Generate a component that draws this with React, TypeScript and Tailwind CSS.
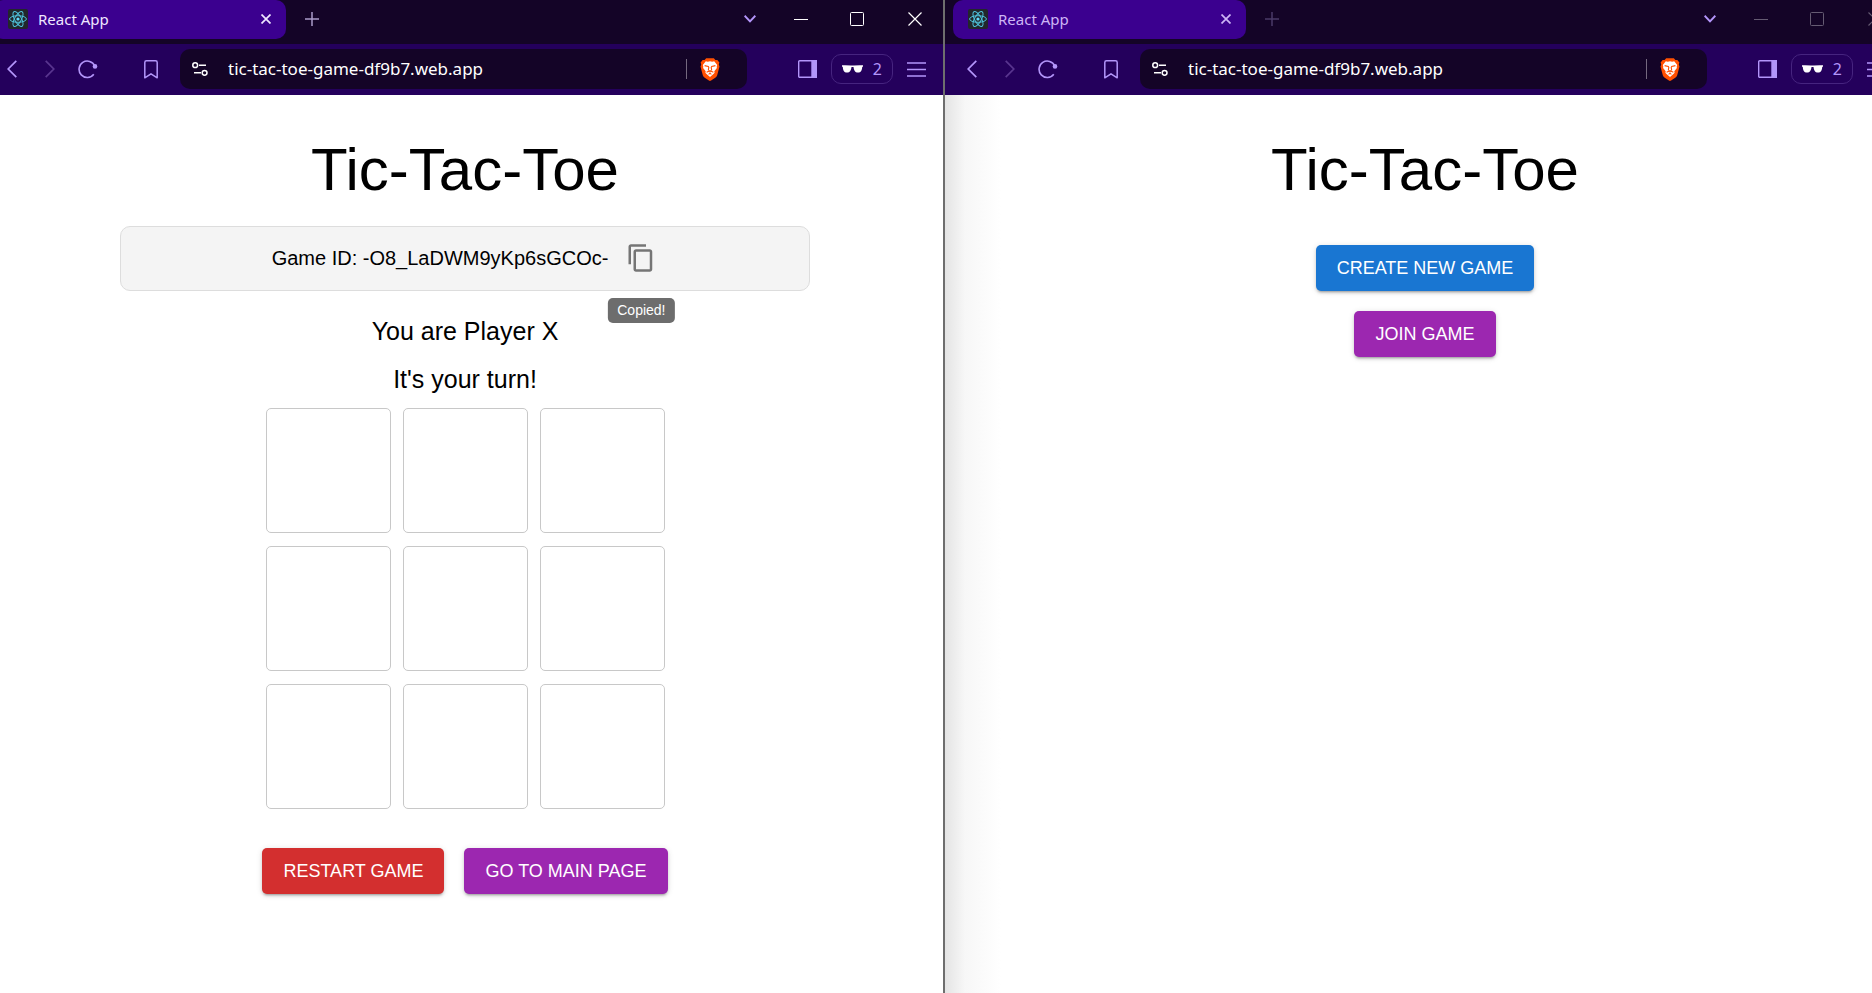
import React from "react";

const ui = "font-['Noto_Sans','Open_Sans',sans-serif]";
const primaryText = "font-['Liberation_Sans',Arial,sans-serif]";

function ReactLogo() {
  return (
    <svg viewBox="0 0 20 20" className="size-5 shrink-0" fill="none" stroke="#4fc3dc" aria-hidden="true">
      <rect width="20" height="20" rx="2" fill="#22272b" stroke="none" />
      <ellipse cx="10" cy="10" rx="8.4" ry="3.3" />
      <ellipse cx="10" cy="10" rx="8.4" ry="3.3" transform="rotate(60 10 10)" />
      <ellipse cx="10" cy="10" rx="8.4" ry="3.3" transform="rotate(120 10 10)" />
      <circle cx="10" cy="10" r="1.6" fill="#61dafb" stroke="none" />
    </svg>
  );
}

function BraveLogo() {
  return (
    <svg viewBox="0 0 20 23" className="h-[23px] w-5 shrink-0" aria-hidden="true">
      <path fill="#ff5000" d="M6.200.3h7.600l1.600 1.800 1.900-.1 2.100 2.400-.6 2 .7 2.100-2.300 8.700c-.3 1-.8 1.700-1.600 2.300l-4.500 3.100c-.7.4-1.500.4-2.200 0l-4.500-3.100c-.8-.6-1.300-1.300-1.600-2.300L.5 8.500l.7-2.100-.6-2L2.700 2l1.900.1z" />
      <path fill="#fff" d="M5.800 3.300l2 .4 2.200-.4 2.200.4 2-.4 3 3.700-.5 1.600.2 1.400-2.600 3.200.3 1.500-.9 1-3.700 3.200-3.700-3.200-.9-1 .3-1.500-2.600-3.200.2-1.400L2.800 7z" />
      <path fill="none" stroke="#ff5000" strokeWidth="1.100" d="M4.600 7.600l3.700.9.500.9-.5 2.900M15.400 7.600l-3.700.9-.5.9.5 2.900M6.600 14.200L10 12.700l3.400 1.500M10 12.600v1.800M8.600 16.400l1.400-1 1.400 1" />
    </svg>
  );
}

function BrowserChrome({ active }: { active: boolean }) {
  const dim = active ? "text-white" : "text-[#655b72]";
  return (
    <header className={`${ui} text-[#b395fa]`}>
      <div className="flex h-11 items-start bg-[#140427]">
        <div className={`ml-2 flex h-[39px] w-[293px] items-center rounded-[10px] bg-[#3b008f] pr-3 pb-0.5 pl-[15px] ${active ? "text-[#efe7ff]" : "text-[#cdb5f5]"}`}>
          <ReactLogo />
          <span className="ml-[10px] flex-1 text-[15px] leading-5">React App</span>
          <button aria-label="Close tab" className="flex size-4 items-center justify-center">
            <svg viewBox="0 0 10 10" className="size-[10px]" stroke="currentColor" strokeWidth="1.7" fill="none"><path d="M.5.5l9 9M9.5.5l-9 9" /></svg>
          </button>
        </div>
        <button aria-label="New tab" className={`ml-[18px] flex h-[38px] w-4 items-center justify-center ${active ? "text-[#a99bc9]" : "text-[#4a3a68]"}`}>
          <svg viewBox="0 0 14 14" className="size-[14px] shrink-0" stroke="currentColor" strokeWidth="1.5" fill="none"><path d="M7 0v14M0 7h14" /></svg>
        </button>
        <div className="ml-auto flex h-[38px] items-center">
          <button aria-label="Search tabs" className="mr-[38px]">
            <svg viewBox="0 0 12 8" className="h-2 w-3" stroke="currentColor" strokeWidth="2" fill="none"><path d="M.6.8L6 6.4 11.4.8" /></svg>
          </button>
          <button aria-label="Minimize" className={`mr-[42px] ${dim}`}>
            <svg viewBox="0 0 14 14" className="size-[14px]" stroke="currentColor" fill="none"><path d="M0 7.5h14" /></svg>
          </button>
          <button aria-label="Maximize" className={`mr-[44px] ${dim}`}>
            <svg viewBox="0 0 14 14" className="size-[14px]" stroke="currentColor" fill="none"><rect x=".5" y=".5" width="13" height="13" rx="1" /></svg>
          </button>
          <button aria-label="Close window" className={`mr-[23px] ${dim}`}>
            <svg viewBox="0 0 14 14" className="size-[14px]" stroke="currentColor" strokeWidth="1.2" fill="none"><path d="M.5.5l13 13M13.5.5l-13 13" /></svg>
          </button>
        </div>
      </div>
      <div className="flex h-[51px] items-center bg-[#24005c] pr-[19px] pb-px pl-[22px]">
        <button aria-label="Back" className="mr-7">
          <svg viewBox="0 0 10 18" className="h-[18px] w-[10px]" stroke="currentColor" strokeWidth="1.7" fill="none"><path d="M9.3.8L1.2 9l8.100 8.200" /></svg>
        </button>
        <button aria-label="Forward" className="mr-[23px] text-[#59358f]">
          <svg viewBox="0 0 10 18" className="h-[18px] w-[10px]" stroke="currentColor" strokeWidth="1.7" fill="none"><path d="M.7.8L8.800 9l-8.100 8.200" /></svg>
        </button>
        <button aria-label="Reload" className="mr-[46px]">
          <svg viewBox="0 0 20 20" className="size-5" fill="none" stroke="currentColor" strokeWidth="1.6"><path d="M16.800 7A8.200 8.200 0 1 0 15.800 15.200" /><circle cx="17" cy="7.400" r="2.300" fill="currentColor" stroke="none" /></svg>
        </button>
        <button aria-label="Bookmark this page" className="mr-[22px]">
          <svg viewBox="0 0 14 19" className="h-[19px] w-[14px]" fill="none" stroke="currentColor" strokeWidth="1.500" strokeLinejoin="round"><path d="M.8 17.800V2.500C.8 1.500 1.500.8 2.500.8h9c1 0 1.700.7 1.700 1.700v15.300L7 13.800z" /></svg>
        </button>
        <div className="flex h-10 min-w-0 flex-1 items-center rounded-[10px] bg-[#140427] pr-[27px] pl-3">
          <svg viewBox="0 0 16 14" className="mr-5 h-[14px] w-4 shrink-0 text-white" fill="none" stroke="currentColor" strokeWidth="1.500" aria-hidden="true"><circle cx="3.200" cy="3.200" r="2.400" /><path d="M7 3.200h7M2 10.800h7" /><circle cx="12.600" cy="10.800" r="2.400" /></svg>
          <input aria-label="Address" defaultValue="tic-tac-toe-game-df9b7.web.app" className="min-w-0 flex-1 bg-transparent text-[17px] leading-6 text-white outline-none" />
          <span className="mr-[13px] h-5 w-px bg-[#75697f]" />
          <button aria-label="Brave Shields"><BraveLogo /></button>
        </div>
        <button aria-label="Sidebar" className="mr-[14px] ml-[51px]">
          <svg viewBox="0 0 19 18" className="h-[18px] w-[19px]" fill="none" stroke="currentColor" strokeWidth="1.400"><rect x=".7" y=".7" width="17.600" height="16.600" rx="1" /><path d="M14 .7h4.300v16.600H14z" fill="currentColor" /></svg>
        </button>
        <button aria-label="Private windows" className="mr-[14px] flex h-[30px] w-[62px] items-center justify-between rounded-[10px] border border-[#46247f] px-[10px] text-base leading-5">
          <svg viewBox="0 0 21 8" className="h-2 w-[21px]" fill="#fff"><path d="M0 .3Q5 0 9 .6h3Q16 0 21 .3v1.200l-.8.5C20 5.500 19 7.500 16 7.500s-4-2-4.500-5.500h-2C9 5.500 8 7.500 5 7.500S1 5.500.8 2L0 1.500z" /></svg>
          <span>2</span>
        </button>
        <button aria-label="Menu">
          <svg viewBox="0 0 19 15" className="h-[15px] w-[19px]" stroke="currentColor" strokeWidth="1.400"><path d="M0 1h19M0 7.500h19M0 14h19" /></svg>
        </button>
      </div>
    </header>
  );
}

function ActionButton({ color, children }: { color: string; children: string }) {
  return (
    <button className={`rounded-[5px] px-[21px] py-2 text-[18px] leading-[30px] text-white shadow-[0_3px_2px_-2px_rgba(0,0,0,0.2),0_2px_3px_rgba(0,0,0,0.14),0_1px_6px_rgba(0,0,0,0.12)] ${color}`}>
      {children}
    </button>
  );
}

function GameScreen() {
  return (
    <main className="flex flex-col items-center pt-[39px]">
      <h1 className="text-[60px] leading-[72px]">Tic-Tac-Toe</h1>
      <section className="mt-5 flex h-[65px] w-[690px] items-center justify-center gap-[18px] rounded-[10px] border border-[#dddddd] bg-[#f4f4f4] pr-0.5 pb-0.5 text-xl">
        <p>Game ID: -O8_LaDWM9yKp6sGCOc-</p>
        <div className="relative flex">
          <button aria-label="Copy game ID" className="text-[#757575]">
            <svg viewBox="0 0 24 24" className="size-[30px]" fill="currentColor"><path d="M16 1H4c-1.100 0-2 .9-2 2v14h2V3h12zm3 4H8c-1.100 0-2 .9-2 2v14c0 1.100.9 2 2 2h11c1.100 0 2-.9 2-2V7c0-1.100-.9-2-2-2m0 16H8V7h11z" /></svg>
          </button>
          <span role="tooltip" className="absolute top-[55px] left-1/2 -translate-x-1/2 rounded-[5px] bg-[#6d6d6d] px-[9px] py-1 text-sm leading-[17px] text-white">Copied!</span>
        </div>
      </section>
      <p className="mt-5 text-[25px] leading-[40px]">You are Player X</p>
      <p className="mt-2 text-[25px] leading-[40px]">It's your turn!</p>
      <div className="mt-[9px] grid grid-cols-3 gap-x-3 gap-y-[13px]">
        {Array.from({ length: 9 }, (_, i) => (
          <button key={i} aria-label={`Square ${i + 1}`} className="size-[125px] rounded-[5px] border border-[#c8c8c8]" />
        ))}
      </div>
      <div className="mt-[39px] flex gap-5">
        <ActionButton color="bg-[#d32f2f]">RESTART GAME</ActionButton>
        <ActionButton color="bg-[#9c27b0]">GO TO MAIN PAGE</ActionButton>
      </div>
    </main>
  );
}

function StartScreen() {
  return (
    <main className="flex flex-col items-center pt-[39px]">
      <h1 className="text-[60px] leading-[72px]">Tic-Tac-Toe</h1>
      <div className="mt-[39px] flex flex-col items-center gap-5">
        <ActionButton color="bg-[#1976d2]">CREATE NEW GAME</ActionButton>
        <ActionButton color="bg-[#9c27b0]">JOIN GAME</ActionButton>
      </div>
    </main>
  );
}

export default function App() {
  return (
    <div className={`grid min-h-screen grid-cols-[945fr_927fr] overflow-hidden bg-white text-black ${primaryText}`}>
      <div className="min-w-0 overflow-hidden border-r-2 border-[#6e6e6e]">
        <div className="-ml-[15px] w-[calc(100%+17px)]">
          <BrowserChrome active />
          <GameScreen />
        </div>
      </div>
      <div className="min-w-0 overflow-hidden bg-linear-to-r from-[#e4e4e4] via-[#f7f7f7] via-[20px] to-white to-[56px]">
        <div className="w-[calc(100%+33px)]">
          <BrowserChrome active={false} />
          <StartScreen />
        </div>
      </div>
    </div>
  );
}
